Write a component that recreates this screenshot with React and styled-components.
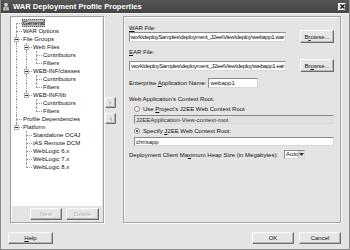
import React from "react";
import styled, { createGlobalStyle, css } from "styled-components";

const Global = createGlobalStyle`
  html, body { margin: 0; padding: 0; background: #e4e4e4; }
  body { font-family: "Liberation Sans", Arial, sans-serif; font-size: 6px; color: #111; }
  * { box-sizing: border-box; }
`;

const Window = styled.div`
  width: 350px;
  height: 250px;
  display: flex;
  flex-direction: column;
  background: #e4e4e4;
  border: 1px solid #8a8a8a;
  border-top: none;
  overflow: hidden;
`;

const TitleBar = styled.div`
  height: 14px;
  flex: none;
  display: flex;
  align-items: center;
  gap: 3px;
  padding: 0 3px 0 2px;
  margin: 0 -1px;
  background: linear-gradient(#565656, #444);
  color: #fff;
  font-weight: bold;
  font-size: 7.6px;
  border-bottom: 1px solid #f4f4f4;
`;

const TitleText = styled.span`
  flex: 1;
  white-space: nowrap;
`;

const CloseBox = styled.span`
  width: 8px;
  height: 8px;
  background: #dedede;
  border: 1px solid #f8f8f8;
  border-right-color: #555;
  border-bottom-color: #555;
  display: flex;
  align-items: center;
  justify-content: center;
  margin-right: 1px;
`;

const Body = styled.div`
  flex: 1;
  display: flex;
  flex-direction: column;
  padding: 2px 8px 0 9px;
  min-width: 0;
`;

const Main = styled.div`
  display: flex;
  height: 207px;
  min-width: 0;
`;

const Etched = css`
  border: 1px solid #a2a2a2;
  box-shadow: inset 1px 1px 0 #fafafa, 1px 1px 0 #fafafa;
`;

const LeftPane = styled.div`
  ${Etched};
  width: 94px;
  flex: none;
  display: flex;
  flex-direction: column;
  padding: 1px 1px 2px 1px;
`;

const TreeBox = styled.div`
  flex: 1;
  background: #fff;
  padding-top: 1px;
  overflow: hidden;
`;

const TreeRowEl = styled.div`
  display: flex;
  height: 8px;
`;

const lineColor = "#9c9c9c";

const Guide = styled.span`
  width: 10px;
  flex: none;
  position: relative;
  ${(p) =>
    p.$line &&
    css`
      &::before {
        content: "";
        position: absolute;
        left: 4px;
        top: 0;
        bottom: 0;
        border-left: 1px dotted ${lineColor};
      }
    `}
`;

const Connector = styled.span`
  width: 10px;
  flex: none;
  position: relative;
  &::before {
    content: "";
    position: absolute;
    left: 4px;
    top: ${(p) => (p.$first ? "4px" : "0")};
    bottom: ${(p) => (p.$last ? "4px" : "0")};
    border-left: 1px dotted ${lineColor};
  }
  &::after {
    content: "";
    position: absolute;
    left: 4px;
    right: 0;
    top: 4px;
    border-top: 1px dotted ${lineColor};
  }
`;

const Expander = styled.span`
  position: absolute;
  left: 2px;
  top: 2px;
  width: 5px;
  height: 5px;
  background: #fff;
  border: 1px solid #b4b4b4;
  z-index: 1;
  &::after {
    content: "";
    position: absolute;
    left: 0;
    right: 0;
    top: 1px;
    border-top: 1px solid #333;
  }
`;

const NodeLabel = styled.span`
  line-height: 8px;
  height: 8px;
  padding: 0 1px;
  white-space: nowrap;
  ${(p) =>
    p.$selected &&
    css`
      background: #bcbcbc;
      outline: 1px dotted #555;
      outline-offset: -1px;
    `}
`;

const PaneButtons = styled.div`
  display: flex;
  justify-content: flex-end;
  gap: 4px;
  padding-right: 3px;
  margin-top: 2px;
`;

const Button = styled.button`
  font-family: inherit;
  font-size: 6px;
  height: ${(p) => p.$h || 12}px;
  width: ${(p) => p.$w}px;
  padding: 0;
  background: #e6e6e6;
  color: ${(p) => (p.disabled ? "#b0b0b0" : "#111")};
  border: 1px solid #fbfbfb;
  border-right-color: #6e6e6e;
  border-bottom-color: #6e6e6e;
  box-shadow: inset -1px -1px 0 #b4b4b4;
  display: flex;
  align-items: center;
  justify-content: center;
  flex: none;
  text-shadow: ${(p) => (p.disabled ? "1px 1px 0 #fff" : "none")};
`;

const ArrowCol = styled.div`
  width: 19px;
  flex: none;
  display: flex;
  flex-direction: column;
  gap: 5px;
  padding: 81px 0 0 1px;
`;

const RightPane = styled.div`
  ${Etched};
  flex: 1;
  min-width: 0;
  display: flex;
  flex-direction: column;
  padding: 8px 6px 0 5px;
`;

const Label = styled.div`
  line-height: 6px;
  height: 6px;
  white-space: nowrap;
  margin-top: ${(p) => p.$mt || 0}px;
  padding-left: ${(p) => p.$indent || 0}px;
`;

const Row = styled.div`
  display: flex;
  align-items: center;
  gap: ${(p) => p.$gap || 0}px;
  height: ${(p) => p.$h}px;
  margin-top: ${(p) => p.$mt || 0}px;
  padding-left: ${(p) => p.$indent || 0}px;
  white-space: nowrap;
  min-width: 0;
`;

const Field = styled.div`
  height: ${(p) => p.$h || 10}px;
  width: ${(p) => (p.$w ? `${p.$w}px` : "auto")};
  flex: ${(p) => (p.$w ? "none" : "1 1 0")};
  min-width: 0;
  background: ${(p) => (p.$disabled ? "#e0e0e0" : "#fff")};
  border: 1px solid #8a8a8a;
  border-right-color: #d8d8d8;
  border-bottom-color: #d8d8d8;
  display: flex;
  align-items: center;
  justify-content: ${(p) => (p.$end ? "flex-end" : "flex-start")};
  padding: 0 1px;
  overflow: hidden;
  white-space: nowrap;
  line-height: 6px;
  color: ${(p) => (p.$disabled ? "#333" : "#111")};
`;

const PathText = styled.span`
  flex: none;
  letter-spacing: -0.38px;
`;

const Radio = styled.span`
  width: 6px;
  height: 6px;
  border-radius: 50%;
  background: #fff;
  border: 1px solid #8a8a8a;
  flex: none;
  margin: 0 3px 0 2px;
  display: flex;
  align-items: center;
  justify-content: center;
  &::after {
    content: "";
    width: 2px;
    height: 2px;
    border-radius: 50%;
    background: ${(p) => (p.$checked ? "#222" : "transparent")};
  }
`;

const Select = styled.div`
  width: 21px;
  height: 9px;
  flex: none;
  display: flex;
  background: #fff;
  border: 1px solid #8a8a8a;
  border-right-color: #d8d8d8;
  border-bottom-color: #d8d8d8;
  line-height: 7px;
  padding-left: 1px;
  margin-left: 6px;
`;

const SelectText = styled.span`
  flex: 1;
`;

const SelectArrow = styled.span`
  width: 7px;
  background: #e2e2e2;
  border-left: 1px solid #bbb;
  display: flex;
  align-items: center;
  justify-content: center;
`;

const Footer = styled.div`
  display: flex;
  align-items: center;
  margin-top: 9px;
  margin-left: -2px;
  gap: 5px;
`;

const Spacer = styled.div`
  flex: 1;
`;

const tree = [
  { l: "General", level: 0, guides: [], first: true, selected: true },
  { l: "WAR Options", level: 0, guides: [] },
  { l: "File Groups", level: 0, guides: [], exp: true },
  { l: "Web Files", level: 1, guides: [true], exp: true },
  { l: "Contributors", level: 2, guides: [true, true] },
  { l: "Filters", level: 2, guides: [true, true], last: true },
  { l: "WEB-INF/classes", level: 1, guides: [true], exp: true },
  { l: "Contributors", level: 2, guides: [true, true] },
  { l: "Filters", level: 2, guides: [true, true], last: true },
  { l: "WEB-INF/lib", level: 1, guides: [true], exp: true, last: true },
  { l: "Contributors", level: 2, guides: [true, false] },
  { l: "Filters", level: 2, guides: [true, false], last: true },
  { l: "Profile Dependencies", level: 0, guides: [] },
  { l: "Platform", level: 0, guides: [], exp: true, last: true },
  { l: "Standalone OC4J", level: 1, guides: [false] },
  { l: "iAS Remote DCM", level: 1, guides: [false] },
  { l: "WebLogic 6.x", level: 1, guides: [false] },
  { l: "WebLogic 7.x", level: 1, guides: [false] },
  { l: "WebLogic 8.x", level: 1, guides: [false], last: true },
];

const TitleIcon = () => (
  <svg width="8" height="9" viewBox="0 0 8 9">
    <circle cx="4" cy="2.5" r="1.8" fill="#d8d8d8" />
    <path d="M1 8.5 L1.5 5 Q4 3.5 6.5 5 L7 8.5 Z" fill="#bfbfbf" />
    <path d="M3 5 L4 8 L5 5" stroke="#888" strokeWidth="0.7" fill="none" />
  </svg>
);

const CloseIcon = () => (
  <svg width="5" height="5" viewBox="0 0 5 5">
    <path d="M0.5 0.5 L4.5 4.5 M4.5 0.5 L0.5 4.5" stroke="#111" strokeWidth="1.2" />
  </svg>
);

const ArrowGlyph = ({ dir }) => (
  <svg width="5" height="6" viewBox="0 0 5 6">
    <path
      d={dir === "r" ? "M1 0.5 L4 3 L1 5.5 Z" : "M4 0.5 L1 3 L4 5.5 Z"}
      fill="#c4c4c4"
    />
  </svg>
);

const DownGlyph = () => (
  <svg width="5" height="3" viewBox="0 0 5 3">
    <path d="M0 0 L5 0 L2.5 3 Z" fill="#333" />
  </svg>
);

export default function App() {
  return (
    <>
      <Global />
      <Window>
        <TitleBar>
          <TitleIcon />
          <TitleText>WAR Deployment Profile Properties</TitleText>
          <CloseBox>
            <CloseIcon />
          </CloseBox>
        </TitleBar>
        <Body>
          <Main>
            <LeftPane>
              <TreeBox>
                {tree.map((n, i) => (
                  <TreeRowEl key={i}>
                    {n.guides.map((g, j) => (
                      <Guide key={j} $line={g} />
                    ))}
                    <Connector $first={n.first} $last={n.last}>
                      {n.exp && <Expander />}
                    </Connector>
                    <NodeLabel $selected={n.selected}>{n.l}</NodeLabel>
                  </TreeRowEl>
                ))}
              </TreeBox>
              <PaneButtons>
                <Button disabled $w={32}>
                  New
                </Button>
                <Button disabled $w={33}>
                  Delete
                </Button>
              </PaneButtons>
            </LeftPane>
            <ArrowCol>
              <Button disabled $w={11} $h={11}>
                <ArrowGlyph dir="r" />
              </Button>
              <Button disabled $w={11} $h={11}>
                <ArrowGlyph dir="l" />
              </Button>
            </ArrowCol>
            <RightPane>
              <Label>
                <u>W</u>AR File:
              </Label>
              <Row $h={13} $gap={14} $mt={-1}>
                <Field $end>
                  <PathText>work\deploySamples\deployment_J2ee\View\deploy\webapp1.war</PathText>
                </Field>
                <Button $w={34} $h={13}>
                  B<u>r</u>owse...
                </Button>
              </Row>
              <Label $mt={6}>
                <u>E</u>AR File:
              </Label>
              <Row $h={13} $gap={14} $mt={4}>
                <Field $end>
                  <PathText>work\deploySamples\deployment_J2ee\View\deploy\webapp1.ear</PathText>
                </Field>
                <Button $w={34} $h={13}>
                  Br<u>o</u>wse...
                </Button>
              </Row>
              <Row $h={10} $gap={2} $mt={6}>
                <span>
                  Enterprise <u>A</u>pplication Name:
                </span>
                <Field $w={50}>webapp1</Field>
              </Row>
              <Label $mt={8}>Web Application's Context Root:</Label>
              <Row $h={8} $mt={3} $indent={3}>
                <Radio />
                <span>
                  Use <u>P</u>roject's J2EE Web Context Root
                </span>
              </Row>
              <Row $h={9} $mt={2} $indent={5}>
                <Field $h={9} $disabled>
                  J2EEApplication-View-context-root
                </Field>
              </Row>
              <Row $h={8} $mt={3} $indent={3}>
                <Radio $checked />
                <span>
                  Specify <u>J</u>2EE Web Context Root:
                </span>
              </Row>
              <Row $h={9} $mt={2} $indent={5}>
                <Field $h={9}>chrisapp</Field>
              </Row>
              <Row $h={9} $mt={4}>
                <span>
                  Deployment Client Ma<u>x</u>imum Heap Size (in Megabytes):
                </span>
                <Select>
                  <SelectText>Auto</SelectText>
                  <SelectArrow>
                    <DownGlyph />
                  </SelectArrow>
                </Select>
              </Row>
            </RightPane>
          </Main>
          <Footer>
            <Button $w={45} $h={12}>
              <u>H</u>elp
            </Button>
            <Spacer />
            <Button $w={42} $h={12}>
              OK
            </Button>
            <Button $w={42} $h={12}>
              Cancel
            </Button>
          </Footer>
        </Body>
      </Window>
    </>
  );
}
